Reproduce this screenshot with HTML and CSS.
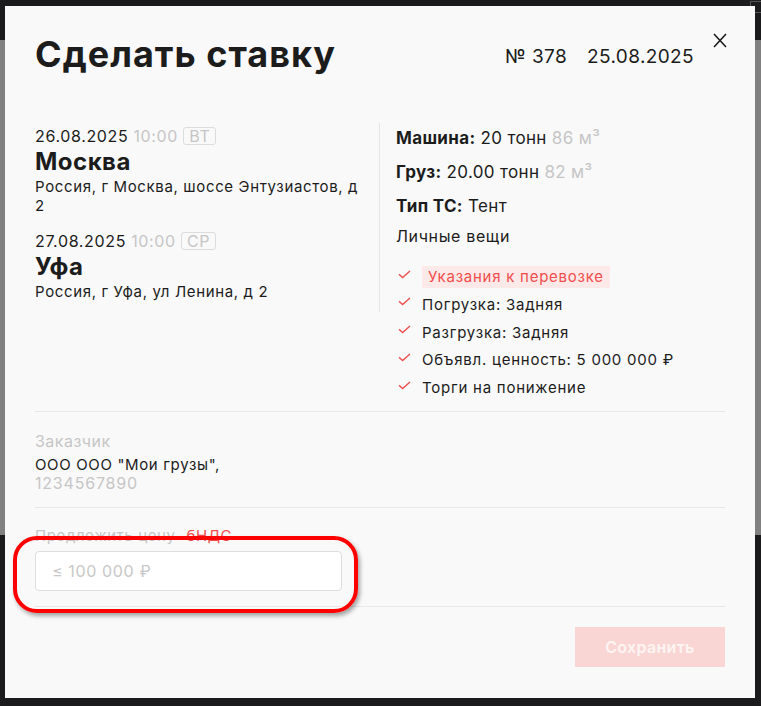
FILE: index.html
```html
<!DOCTYPE html>
<html lang="ru">
<head>
    <meta charset="UTF-8">
    <meta name="viewport" content="width=device-width, initial-scale=1.0">
    <title>Сделать ставку</title>
    <link rel="stylesheet" href="styles.css">
</head>
<body>
    <!-- page behind the overlay -->
    <div class="page">
        <div class="page-top"><span class="page-box"></span></div>
        <div class="page-band"></div>
    </div>

    <!-- Bid modal -->
    <div class="modal">
        <header class="modal-head">
            <h1>Сделать ставку</h1>
            <div class="meta">
                <span>№ 378</span>
                <span>25.08.2025</span>
            </div>
            <button class="close" aria-label="Закрыть">
                <svg width="14" height="15" viewBox="0 0 14 15"><path d="M1 1L13 14M13 1L1 14" stroke="#1c1c1c" stroke-width="1.6" fill="none"/></svg>
            </button>
        </header>

        <section class="route">
            <div class="points">
                <div class="point">
                    <div class="when">26.08.2025 <span class="time">10:00</span> <span class="day">ВТ</span></div>
                    <div class="city">Москва</div>
                    <div class="address">Россия, г Москва, шоссе Энтузиастов, д 2</div>
                </div>
                <div class="point">
                    <div class="when">27.08.2025 <span class="time">10:00</span> <span class="day">СР</span></div>
                    <div class="city">Уфа</div>
                    <div class="address">Россия, г Уфа, ул Ленина, д 2</div>
                </div>
            </div>

            <div class="cargo">
                <div class="spec"><b>Машина:</b> 20 тонн <span class="muted">86 м³</span></div>
                <div class="spec"><b>Груз:</b> 20.00 тонн <span class="muted">82 м³</span></div>
                <div class="spec"><b>Тип ТС:</b> Тент</div>
                <div class="goods">Личные вещи</div>
                <ul class="checks">
                    <li><svg class="tick" width="13" height="9" viewBox="0 0 13 9"><path d="M1 4.2L4.6 7.6L12 1" stroke="#ef4f4f" stroke-width="1.4" fill="none"/></svg><span class="note">Указания к перевозке</span></li>
                    <li><svg class="tick" width="13" height="9" viewBox="0 0 13 9"><path d="M1 4.2L4.6 7.6L12 1" stroke="#ef4f4f" stroke-width="1.4" fill="none"/></svg>Погрузка: Задняя</li>
                    <li><svg class="tick" width="13" height="9" viewBox="0 0 13 9"><path d="M1 4.2L4.6 7.6L12 1" stroke="#ef4f4f" stroke-width="1.4" fill="none"/></svg>Разгрузка: Задняя</li>
                    <li><svg class="tick" width="13" height="9" viewBox="0 0 13 9"><path d="M1 4.2L4.6 7.6L12 1" stroke="#ef4f4f" stroke-width="1.4" fill="none"/></svg>Объявл. ценность: 5 000 000 ₽</li>
                    <li><svg class="tick" width="13" height="9" viewBox="0 0 13 9"><path d="M1 4.2L4.6 7.6L12 1" stroke="#ef4f4f" stroke-width="1.4" fill="none"/></svg>Торги на понижение</li>
                </ul>
            </div>
        </section>

        <section class="customer">
            <div class="label">Заказчик</div>
            <div class="name">ООО ООО "Мои грузы",</div>
            <div class="muted inn">1234567890</div>
        </section>

        <section class="price">
            <div class="label">Предложить цену <span class="vat">бНДС</span></div>
            <input class="price-input" type="text" placeholder="≤ 100 000 ₽">
        </section>

        <div class="actions">
            <button class="save">Сохранить</button>
        </div>
    </div>

    <!-- red marker drawn over the screenshot -->
    <div class="marker"></div>
</body>
</html>
```

FILE: styles.css
```css
body {
    margin: 0;
    background-color: #1b1b1d;
    font-family: Inter, "Noto Sans", sans-serif;
    letter-spacing: 0.04em;
    color: #1c1c1c;
    height: 706px;
    overflow: hidden;
}
.page-top {
    height: 40px;
    position: relative;
}
.page-box {
    position: absolute;
    right: 0;
    top: 1px;
    width: 10px;
    height: 10px;
    border: 1px solid #555;
    border-right: none;
}
.page-band {
    height: 495px;
    background-color: #808080;
}
.modal {
    position: absolute;
    left: 5px;
    top: 6px;
    width: 690px;
    height: 636px;
    padding: 26px 30px 30px;
    background-color: #f9f9f9;
}
.modal-head {
    display: flex;
    align-items: flex-start;
}
.modal-head h1 {
    margin: 0;
    font-size: 36px;
    line-height: 44px;
    font-weight: 700;
    letter-spacing: 0.028em;
    flex: 1;
}
.meta {
    display: flex;
    gap: 20px;
    margin-top: 13px;
    font-size: 19px;
    line-height: 24px;
    letter-spacing: 0.02em;
}
.close {
    border: none;
    background: none;
    padding: 0;
    margin: 1px -2px 0 19px;
    width: 14px;
    height: 15px;
    display: flex;
}
.route {
    display: flex;
    margin-top: 47px;
    padding-bottom: 12px;
    border-bottom: 1px solid #e8e8e8;
}
.points {
    width: 329px;
    padding: 2px 15px 11px 0;
    border-right: 1px solid #e6e6e6;
    align-self: flex-start;
}
.point + .point {
    margin-top: 15px;
}
.when {
    font-size: 16px;
    line-height: 22px;
}
.time {
    color: #c6c6c6;
}
.day {
    display: inline-block;
    font-size: 16px;
    line-height: 16px;
    padding: 0 5px;
    color: #c6c6c6;
    border: 1px solid #dcdcdc;
    border-radius: 3px;
    vertical-align: 0;
}
.city {
    font-size: 24px;
    line-height: 30px;
    font-weight: 700;
    letter-spacing: 0.02em;
}
.address {
    font-size: 15px;
    line-height: 19px;
}
.cargo {
    flex: 1;
    padding: 4px 0 0 16px;
}
.spec {
    font-size: 17px;
    line-height: 22px;
    letter-spacing: 0.02em;
}
.spec + .spec {
    margin-top: 12px;
}
.spec b {
    font-weight: 700;
}
.muted {
    color: #c6c6c6;
}
.goods {
    margin-top: 8px;
    font-size: 16px;
    line-height: 22px;
}
.checks {
    list-style: none;
    margin: 19px 0 0;
    padding: 0;
    display: flex;
    flex-direction: column;
    gap: 5.75px;
    font-size: 15px;
    line-height: 22px;
    letter-spacing: 0.05em;
}
.checks li {
    display: flex;
    align-items: center;
}
.tick {
    margin: 0 11px 6px 2px;
}
.note {
    color: #f14d4d;
    background-color: #fce9e8;
    padding: 0 6px;
}
.customer {
    padding: 19px 0 14px;
    border-bottom: 1px solid #e8e8e8;
    font-size: 15px;
    line-height: 19px;
}
.label {
    color: #c6c6c6;
    font-size: 16px;
    line-height: 20px;
    letter-spacing: 0.03em;
}
.customer .name {
    margin-top: 4px;
}
.inn {
    font-size: 16px;
    letter-spacing: 0.05em;
}
.price {
    padding: 18px 0 15px;
    border-bottom: 1px solid #e8e8e8;
}
.price .label {
    font-size: 15px;
    letter-spacing: 0.04em;
}
.vat {
    color: #f14d4d;
    margin-left: 6px;
}
.price-input {
    display: block;
    margin-top: 5px;
    width: 307px;
    height: 40px;
    box-sizing: border-box;
    padding: 0 16px;
    border: 1px solid #dedede;
    border-radius: 4px;
    background-color: #fff;
    font-family: Inter, "Noto Sans", sans-serif;
    font-size: 16px;
    letter-spacing: 0.04em;
}
.price-input::placeholder {
    color: #c8c8c8;
}
.actions {
    display: flex;
    justify-content: flex-end;
    margin-top: 20px;
}
.save {
    width: 150px;
    height: 40px;
    border: none;
    background-color: #f9d6d4;
    color: #fdf4f3;
    font-family: Inter, "Noto Sans", sans-serif;
    font-size: 16px;
    font-weight: 600;
    letter-spacing: 0.02em;
}
.marker {
    position: absolute;
    left: 13px;
    top: 536px;
    width: 337px;
    height: 69px;
    border: 4px solid #ff0000;
    border-radius: 24px;
    box-shadow: 2px 3px 4px rgba(0, 0, 0, 0.35);
}
```
